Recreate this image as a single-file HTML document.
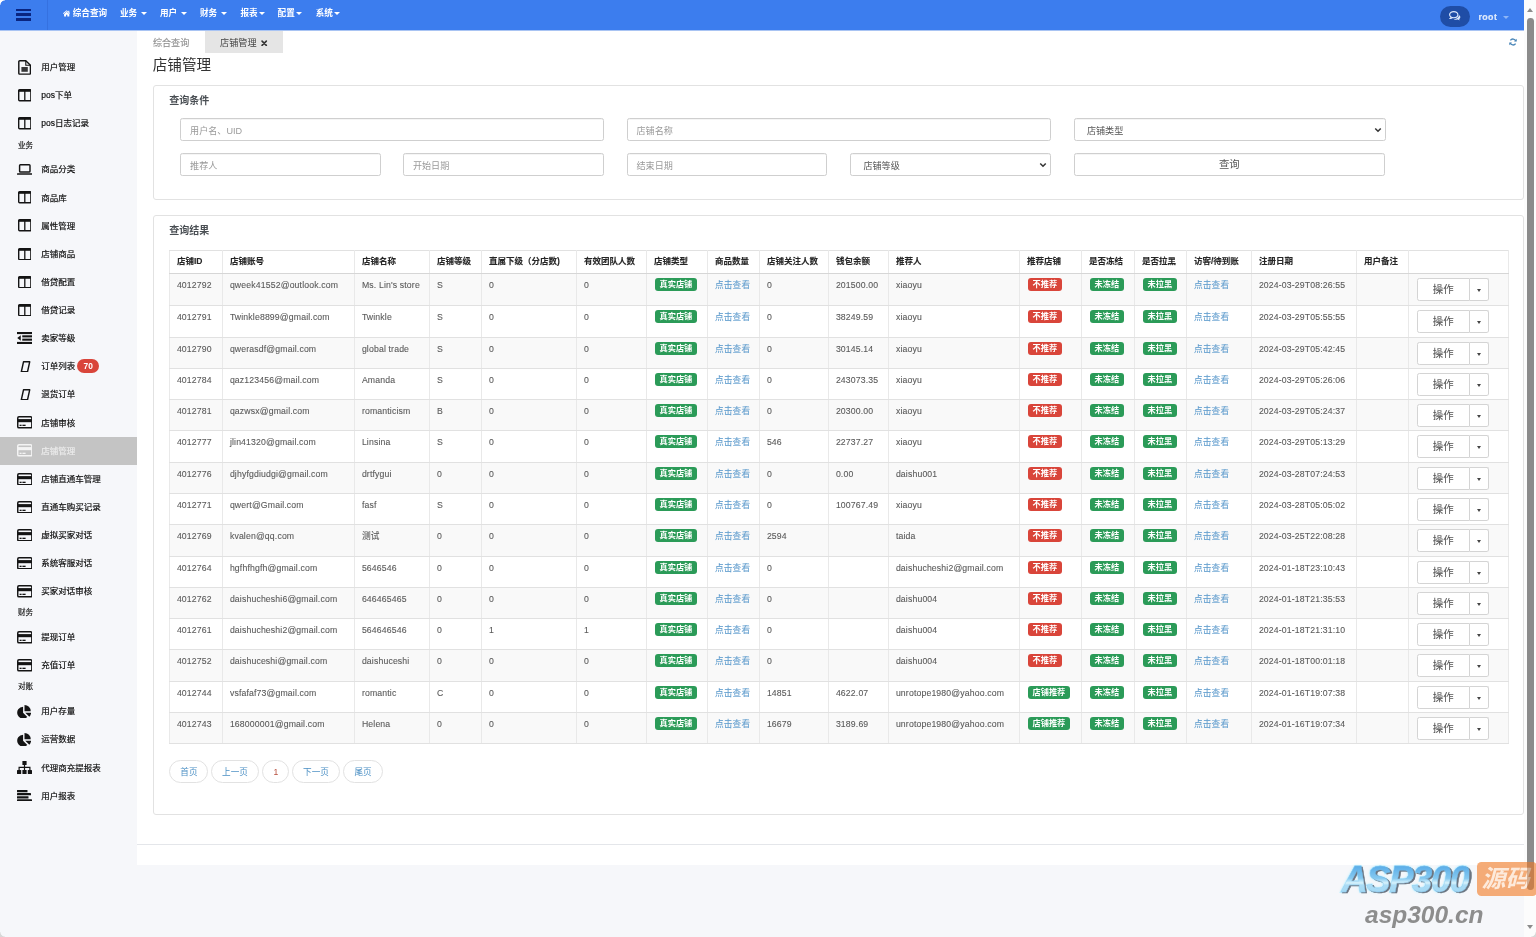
<!DOCTYPE html>
<html lang="zh-CN">
<head>
<meta charset="utf-8">
<title>店铺管理</title>
<style>
*{box-sizing:border-box;margin:0;padding:0}
html,body{width:1536px;height:937px;overflow:hidden}
body{position:relative;background:#f6f7fa;font-family:"Liberation Sans","Noto Sans CJK SC",sans-serif;font-size:8.6px;color:#555;-webkit-font-smoothing:antialiased}
a{text-decoration:none;color:inherit}
#app{position:absolute;left:0;top:0;width:1536px;height:937px;overflow:hidden;will-change:transform;background:#f6f7fa}
/* navbar */
.nav{position:absolute;left:0;top:0;width:1524px;height:31px;background:#3c7dee;border-bottom:1px solid #a9c4f3}
.nav .bars{position:absolute;left:16px;top:8.5px;width:14.5px;height:12.2px}
.nav .bars i{position:absolute;left:0;width:100%;height:2.3px;background:#0a2580;border-radius:.3px}
.nav .div{position:absolute;left:47px;top:0;width:1px;height:30px;background:rgba(20,60,160,.18)}
.nm{position:absolute;top:0;height:27.8px;line-height:27.8px;color:#fff;font-weight:bold;font-size:8.6px;white-space:nowrap}
.nm .sp{display:inline-block;width:2.7px}
.nm svg{vertical-align:middle}
.car{display:inline-block;width:0;height:0;border-left:3.3px solid transparent;border-right:3.3px solid transparent;border-top:3.5px solid currentColor;vertical-align:middle;position:relative;top:-.2px;margin-left:.8px}
.chat{position:absolute;left:1440.2px;top:6px;width:30.2px;height:21.4px;border-radius:11px;background:#1f4da6}
.root{position:absolute;left:1478.4px;top:0;height:34.6px;line-height:34.6px;color:#dfeafc;font-weight:bold;font-size:8.8px;letter-spacing:.45px;-webkit-text-stroke:.2px currentColor}
.rootc{position:absolute;left:1502.4px;top:15.8px;color:#8db6f7}
/* sidebar */
.side{position:absolute;left:0;top:30px;width:137.2px;height:907px;background:#f6f7fa;padding-top:23.2px}
.si{display:block;position:relative;height:28.13px;line-height:28.13px;color:#0c0c0c;font-size:8.5px;white-space:nowrap;-webkit-text-stroke:.18px currentColor}
.si .sic{position:absolute;left:16.4px;top:0;width:16px;height:28.13px;display:flex;align-items:center;justify-content:center;color:#141414}
.si .st{position:absolute;left:41.2px;top:0}
.si.act{background:#c4c4c4;color:#ececec}
.si.act .sic{color:#f4f4f4}
.sh{height:17.82px;line-height:15px;padding-left:17.9px;font-size:7.6px;color:#111;-webkit-text-stroke:.15px currentColor}
.cnt{position:absolute;left:77.4px;top:7px;height:13.7px;line-height:14px;width:21.5px;border-radius:7px;-webkit-text-stroke:0;background:#d9453a;color:#fff;font-weight:bold;font-size:8.4px;text-align:center}
/* main */
.main{position:absolute;left:137.2px;top:30px;width:1387.1px;height:835.2px;background:#fff}
.fline{position:absolute;left:137.2px;top:844px;width:1387.1px;height:1px;background:#e4e6ea}
.tab0{position:absolute;left:152.9px;top:31px;height:22px;line-height:24.6px;font-size:9.1px;color:#8f8f8f;-webkit-text-stroke:.12px currentColor}
.tab1{position:absolute;left:205px;top:31px;width:78px;height:22px;background:#e5e5e5;line-height:24.4px;font-size:9.1px;color:#444;padding-left:15.1px}
.tab1 svg{position:absolute;left:56.3px;top:8.6px}
.refresh{position:absolute;left:1509.3px;top:37.6px;color:#4a86b8}
h1{position:absolute;left:152.7px;top:53px;height:24px;line-height:24px;font-size:14.6px;font-weight:normal;color:#333}
.card{position:absolute;left:153px;width:1371px;border:1px solid #e2e2e2;border-radius:3px;background:#fff}
.ct{position:absolute;left:15.2px;font-size:10px;font-weight:bold;color:#4a4f54;line-height:14px;height:14px}
.inp{position:absolute;height:23px;border:1px solid #cfcfcf;border-radius:2.4px;background:#fff;line-height:24.2px;font-size:9.1px;color:#9a9a9a;padding-left:8.7px;box-shadow:inset 0 .5px .6px rgba(0,0,0,.08)}
.inp.sel{color:#555;padding-left:12.2px}
.inp.sel svg{position:absolute;right:2.6px;top:7.5px}
.inp.btn{text-align:center;padding-left:0;color:#555;font-size:10.4px;line-height:22px}
/* table */
.tb{position:absolute;left:169px;top:250px;width:1340px;table-layout:fixed;border-collapse:collapse;font-size:8.7px;letter-spacing:.15px;color:#5a5a5a}
.tb th,.tb td{border:1px solid #e9e9e9;border-top-color:#e1e1e1;border-bottom-color:#e1e1e1;padding:0 0 0 6.9px;text-align:left;vertical-align:top;white-space:nowrap;overflow:visible}
.tb th{height:23px;line-height:21.8px;font-weight:bold;color:#262626;font-size:8.5px;letter-spacing:0;-webkit-text-stroke:.12px currentColor;border-bottom:1px solid #d6d6d6}
.tb td{height:31px;line-height:23.4px;-webkit-text-stroke:.1px currentColor}
.tb tr.h32 td{height:32px}
.tb tbody tr:nth-child(odd) td{background:#f9f9f9}
.bd{display:inline-block;height:13.2px;line-height:14px;padding:0 4.95px;border-radius:3px;color:#fff;font-weight:bold;font-size:8.2px;letter-spacing:0;vertical-align:top;margin-top:4.3px;margin-left:.7px;-webkit-text-stroke:0}
.bd.g{background:#2b9b58}
.bd.r{background:#d9453a}
.lk{color:#5f9ccd}
.bg{display:inline-block;vertical-align:top;margin-top:4.2px;margin-left:.8px;height:22.8px;white-space:nowrap;font-size:0}
.b1{display:inline-block;width:53.4px;height:22.8px;line-height:22px;border:1px solid #d4d4d4;border-radius:2.4px 0 0 2.4px;text-align:center;font-size:10.4px;color:#555;background:#fff;vertical-align:top}
.b2{display:inline-block;width:19.4px;height:22.8px;border:1px solid #d4d4d4;border-left:0;border-radius:0 2.4px 2.4px 0;background:#fff;vertical-align:top;position:relative}
.b2 i{position:absolute;left:6.5px;top:9.9px;width:0;height:0;border-left:2.8px solid transparent;border-right:2.8px solid transparent;border-top:3px solid #444}
/* pagination */
.pg{position:absolute;top:760.2px;height:23px;line-height:22px;border:1px solid #e2e2e2;border-radius:12px;text-align:center;font-size:8.6px;color:#4a8fc4;background:#fff}
/* scrollbar */
.sb{position:absolute;left:1524.3px;top:0;width:11.7px;height:937px;background:#fcfcfc}
.sb .th{position:absolute;left:2.9px;top:17.6px;width:6.8px;height:872.8px;border-radius:3.4px;background:#8b8b8b}
.sb .up{position:absolute;left:2.8px;top:8.1px;width:0;height:0;border-left:3.4px solid transparent;border-right:3.4px solid transparent;border-bottom:4.2px solid #8c8c8c}
.sb .dn{position:absolute;left:2.8px;top:925.2px;width:0;height:0;border-left:3.4px solid transparent;border-right:3.4px solid transparent;border-top:4.2px solid #8c8c8c}
/* watermark */
.wm1{position:absolute;left:1341.4px;top:858.6px;width:140px;height:42px;font-family:"Liberation Sans",sans-serif;font-style:italic;font-weight:bold;font-size:36.6px;line-height:42px;letter-spacing:-1.5px;white-space:nowrap}
.wm1 span,.wm1::before,.wm1::after{position:absolute;left:0;top:0}
.wm1::before,.wm1::after{content:"ASP300"}
.wm1::before{z-index:0;color:#c4eeff;text-shadow:0 0 2px #b4eaff,0 0 3.5px #c8f0ff;-webkit-text-stroke:1.8px #c8f1ff}
.wm1::after{z-index:1;left:1.7px;top:1.5px;color:#6c7581;-webkit-text-stroke:.5px #6c7581}
.wm1 .fg{z-index:2;background:linear-gradient(180deg,#5eb0e9 20%,#86c9f0 46%,#d8f3fc 57%,#abdcf5 62%,#a2d8f4 82%);-webkit-background-clip:text;background-clip:text;-webkit-text-fill-color:transparent;color:#7cc4ee;-webkit-text-stroke:.35px rgba(120,190,236,.6)}
.wm2{position:absolute;left:1477px;top:862px;width:60px;height:34px;border-radius:4.5px;background:rgba(244,160,100,.88);color:#fdeadb;font-family:"Liberation Sans","Noto Sans CJK SC",sans-serif;font-style:italic;font-weight:bold;font-size:24px;line-height:33px;white-space:nowrap;padding-left:4.6px;overflow:hidden}
.wmt{position:absolute;left:1527.2px;top:862px;width:6.8px;height:28.4px;border-radius:0 0 3.4px 3.4px;background:rgba(150,85,40,.42)}
.wm3{position:absolute;left:1365px;top:900px;height:30px;line-height:30px;font-family:"Liberation Sans",sans-serif;font-style:italic;font-weight:bold;font-size:24.5px;color:#8d8d8d;white-space:nowrap}
.cn{position:absolute;width:5px;height:5px}
.cn.tl{left:0;top:0;background:radial-gradient(circle at 100% 100%,rgba(255,255,255,0) 4.2px,#fff 5px)}
.cn.bl{left:0;top:932px;background:radial-gradient(circle at 100% 0,rgba(200,200,200,0) 4.2px,#d8d8d8 5px)}
.cn.br{left:1531px;top:932px;background:radial-gradient(circle at 0 0,rgba(200,200,200,0) 4.2px,#d8d8d8 5px)}

</style>
</head>
<body>
<div id="app">
<aside class="side">
<a class="si"><span class="sic"><svg class="ic" width="13.2" height="14.8" viewBox="0 0 26.4 29.6" ><path d="M3.4 1.5h12.2l9.3 9v16a1.8 1.8 0 0 1-1.8 1.8H3.4a1.8 1.8 0 0 1-1.8-1.8V3.3A1.8 1.8 0 0 1 3.4 1.5z" fill="none" stroke="currentColor" stroke-width="2.9" stroke-linejoin="round"/><path d="M15.6 1.5v9h9.3" fill="none" stroke="currentColor" stroke-width="2.2"/><rect x="6.8" y="14" width="12.8" height="9.6" fill="currentColor" opacity=".85"/></svg></span><span class="st">用户管理</span></a>
<a class="si"><span class="sic"><svg class="ic" width="13.6" height="12.4" viewBox="0 0 27.2 24.8" ><rect x="1.4" y="1.4" width="24.4" height="22" rx="1.8" fill="none" stroke="currentColor" stroke-width="2.8"/><rect x="1.4" y="1.4" width="24.4" height="4.2" fill="currentColor"/><rect x="12.3" y="3" width="2.6" height="20" fill="currentColor"/></svg></span><span class="st">pos下单</span></a>
<a class="si"><span class="sic"><svg class="ic" width="13.6" height="12.4" viewBox="0 0 27.2 24.8" ><rect x="1.4" y="1.4" width="24.4" height="22" rx="1.8" fill="none" stroke="currentColor" stroke-width="2.8"/><rect x="1.4" y="1.4" width="24.4" height="4.2" fill="currentColor"/><rect x="12.3" y="3" width="2.6" height="20" fill="currentColor"/></svg></span><span class="st">pos日志记录</span></a>
<div class="sh">业务</div>
<a class="si"><span class="sic"><svg class="ic" width="15.6" height="11" viewBox="0 0 31.2 22" ><rect x="5.2" y="1.5" width="20.8" height="14.5" rx="1.6" fill="none" stroke="currentColor" stroke-width="2.9"/><rect x="0" y="18.6" width="31.2" height="3" rx="1" fill="currentColor"/></svg></span><span class="st">商品分类</span></a>
<a class="si"><span class="sic"><svg class="ic" width="13.6" height="12.4" viewBox="0 0 27.2 24.8" ><rect x="1.4" y="1.4" width="24.4" height="22" rx="1.8" fill="none" stroke="currentColor" stroke-width="2.8"/><rect x="1.4" y="1.4" width="24.4" height="4.2" fill="currentColor"/><rect x="12.3" y="3" width="2.6" height="20" fill="currentColor"/></svg></span><span class="st">商品库</span></a>
<a class="si"><span class="sic"><svg class="ic" width="13.6" height="12.4" viewBox="0 0 27.2 24.8" ><rect x="1.4" y="1.4" width="24.4" height="22" rx="1.8" fill="none" stroke="currentColor" stroke-width="2.8"/><rect x="1.4" y="1.4" width="24.4" height="4.2" fill="currentColor"/><rect x="12.3" y="3" width="2.6" height="20" fill="currentColor"/></svg></span><span class="st">属性管理</span></a>
<a class="si"><span class="sic"><svg class="ic" width="13.6" height="12.4" viewBox="0 0 27.2 24.8" ><rect x="1.4" y="1.4" width="24.4" height="22" rx="1.8" fill="none" stroke="currentColor" stroke-width="2.8"/><rect x="1.4" y="1.4" width="24.4" height="4.2" fill="currentColor"/><rect x="12.3" y="3" width="2.6" height="20" fill="currentColor"/></svg></span><span class="st">店铺商品</span></a>
<a class="si"><span class="sic"><svg class="ic" width="13.6" height="12.4" viewBox="0 0 27.2 24.8" ><rect x="1.4" y="1.4" width="24.4" height="22" rx="1.8" fill="none" stroke="currentColor" stroke-width="2.8"/><rect x="1.4" y="1.4" width="24.4" height="4.2" fill="currentColor"/><rect x="12.3" y="3" width="2.6" height="20" fill="currentColor"/></svg></span><span class="st">借贷配置</span></a>
<a class="si"><span class="sic"><svg class="ic" width="13.6" height="12.4" viewBox="0 0 27.2 24.8" ><rect x="1.4" y="1.4" width="24.4" height="22" rx="1.8" fill="none" stroke="currentColor" stroke-width="2.8"/><rect x="1.4" y="1.4" width="24.4" height="4.2" fill="currentColor"/><rect x="12.3" y="3" width="2.6" height="20" fill="currentColor"/></svg></span><span class="st">借贷记录</span></a>
<a class="si"><span class="sic"><svg class="ic" width="15" height="12" viewBox="0 0 30 24" ><rect x="0" y="0" width="30" height="4.2" fill="currentColor"/><rect x="10.5" y="6.6" width="19.5" height="4.2" fill="currentColor"/><rect x="10.5" y="13.2" width="19.5" height="4.2" fill="currentColor"/><rect x="0" y="19.8" width="30" height="4.2" fill="currentColor"/><path d="M7.5 6.3v11.4L0.5 12z" fill="currentColor"/></svg></span><span class="st">卖家等级</span></a>
<a class="si"><span class="sic"><svg class="ic" width="11" height="11.6" viewBox="0 0 22 23.2" style="margin-left:3px"><path d="M7 1.6h12.4l-4.4 20H2.6z" fill="none" stroke="currentColor" stroke-width="2.9" stroke-linejoin="round"/></svg></span><span class="st">订单列表</span><span class="cnt">70</span></a>
<a class="si"><span class="sic"><svg class="ic" width="11" height="11.6" viewBox="0 0 22 23.2" style="margin-left:3px"><path d="M7 1.6h12.4l-4.4 20H2.6z" fill="none" stroke="currentColor" stroke-width="2.9" stroke-linejoin="round"/></svg></span><span class="st">退货订单</span></a>
<a class="si"><span class="sic"><svg class="ic" width="15.6" height="12.6" viewBox="0 0 31.2 25.2" ><rect x="1.5" y="1.5" width="28.2" height="22.2" rx="2.4" fill="none" stroke="currentColor" stroke-width="2.9"/><rect x="1.5" y="6.2" width="28.2" height="6.2" fill="currentColor"/><rect x="5.2" y="17.4" width="4" height="2.6" fill="currentColor"/><rect x="10.8" y="17.4" width="6.4" height="2.6" fill="currentColor"/></svg></span><span class="st">店铺审核</span></a>
<a class="si act"><span class="sic"><svg class="ic" width="15.6" height="12.6" viewBox="0 0 31.2 25.2" ><rect x="1.5" y="1.5" width="28.2" height="22.2" rx="2.4" fill="none" stroke="currentColor" stroke-width="2.9"/><rect x="1.5" y="6.2" width="28.2" height="6.2" fill="currentColor"/><rect x="5.2" y="17.4" width="4" height="2.6" fill="currentColor"/><rect x="10.8" y="17.4" width="6.4" height="2.6" fill="currentColor"/></svg></span><span class="st">店铺管理</span></a>
<a class="si"><span class="sic"><svg class="ic" width="15.6" height="12.6" viewBox="0 0 31.2 25.2" ><rect x="1.5" y="1.5" width="28.2" height="22.2" rx="2.4" fill="none" stroke="currentColor" stroke-width="2.9"/><rect x="1.5" y="6.2" width="28.2" height="6.2" fill="currentColor"/><rect x="5.2" y="17.4" width="4" height="2.6" fill="currentColor"/><rect x="10.8" y="17.4" width="6.4" height="2.6" fill="currentColor"/></svg></span><span class="st">店铺直通车管理</span></a>
<a class="si"><span class="sic"><svg class="ic" width="15.6" height="12.6" viewBox="0 0 31.2 25.2" ><rect x="1.5" y="1.5" width="28.2" height="22.2" rx="2.4" fill="none" stroke="currentColor" stroke-width="2.9"/><rect x="1.5" y="6.2" width="28.2" height="6.2" fill="currentColor"/><rect x="5.2" y="17.4" width="4" height="2.6" fill="currentColor"/><rect x="10.8" y="17.4" width="6.4" height="2.6" fill="currentColor"/></svg></span><span class="st">直通车购买记录</span></a>
<a class="si"><span class="sic"><svg class="ic" width="15.6" height="12.6" viewBox="0 0 31.2 25.2" ><rect x="1.5" y="1.5" width="28.2" height="22.2" rx="2.4" fill="none" stroke="currentColor" stroke-width="2.9"/><rect x="1.5" y="6.2" width="28.2" height="6.2" fill="currentColor"/><rect x="5.2" y="17.4" width="4" height="2.6" fill="currentColor"/><rect x="10.8" y="17.4" width="6.4" height="2.6" fill="currentColor"/></svg></span><span class="st">虚拟买家对话</span></a>
<a class="si"><span class="sic"><svg class="ic" width="15.6" height="12.6" viewBox="0 0 31.2 25.2" ><rect x="1.5" y="1.5" width="28.2" height="22.2" rx="2.4" fill="none" stroke="currentColor" stroke-width="2.9"/><rect x="1.5" y="6.2" width="28.2" height="6.2" fill="currentColor"/><rect x="5.2" y="17.4" width="4" height="2.6" fill="currentColor"/><rect x="10.8" y="17.4" width="6.4" height="2.6" fill="currentColor"/></svg></span><span class="st">系统客服对话</span></a>
<a class="si"><span class="sic"><svg class="ic" width="15.6" height="12.6" viewBox="0 0 31.2 25.2" ><rect x="1.5" y="1.5" width="28.2" height="22.2" rx="2.4" fill="none" stroke="currentColor" stroke-width="2.9"/><rect x="1.5" y="6.2" width="28.2" height="6.2" fill="currentColor"/><rect x="5.2" y="17.4" width="4" height="2.6" fill="currentColor"/><rect x="10.8" y="17.4" width="6.4" height="2.6" fill="currentColor"/></svg></span><span class="st">买家对话审核</span></a>
<div class="sh">财务</div>
<a class="si"><span class="sic"><svg class="ic" width="15.6" height="12.6" viewBox="0 0 31.2 25.2" ><rect x="1.5" y="1.5" width="28.2" height="22.2" rx="2.4" fill="none" stroke="currentColor" stroke-width="2.9"/><rect x="1.5" y="6.2" width="28.2" height="6.2" fill="currentColor"/><rect x="5.2" y="17.4" width="4" height="2.6" fill="currentColor"/><rect x="10.8" y="17.4" width="6.4" height="2.6" fill="currentColor"/></svg></span><span class="st">提现订单</span></a>
<a class="si"><span class="sic"><svg class="ic" width="15.6" height="12.6" viewBox="0 0 31.2 25.2" ><rect x="1.5" y="1.5" width="28.2" height="22.2" rx="2.4" fill="none" stroke="currentColor" stroke-width="2.9"/><rect x="1.5" y="6.2" width="28.2" height="6.2" fill="currentColor"/><rect x="5.2" y="17.4" width="4" height="2.6" fill="currentColor"/><rect x="10.8" y="17.4" width="6.4" height="2.6" fill="currentColor"/></svg></span><span class="st">充值订单</span></a>
<div class="sh">对账</div>
<a class="si"><span class="sic"><svg class="ic" width="14.2" height="13.4" viewBox="0 0 29.2 28" ><path d="M12.5 3.5v12.8l8.8 8.8A12.5 12.5 0 1 1 12.5 3.5z" fill="currentColor"/><path d="M15.5 0a13 13 0 0 1 13 13h-13z" fill="currentColor"/><path d="M17 16h12.2a12.5 12.5 0 0 1-3.6 8.6z" fill="currentColor"/></svg></span><span class="st">用户存量</span></a>
<a class="si"><span class="sic"><svg class="ic" width="14.2" height="13.4" viewBox="0 0 29.2 28" ><path d="M12.5 3.5v12.8l8.8 8.8A12.5 12.5 0 1 1 12.5 3.5z" fill="currentColor"/><path d="M15.5 0a13 13 0 0 1 13 13h-13z" fill="currentColor"/><path d="M17 16h12.2a12.5 12.5 0 0 1-3.6 8.6z" fill="currentColor"/></svg></span><span class="st">运营数据</span></a>
<a class="si"><span class="sic"><svg class="ic" width="15" height="13" viewBox="0 0 30 26" ><rect x="10.8" y="0" width="8.4" height="7.8" rx="1" fill="currentColor"/><rect x="0" y="18" width="8.4" height="8" rx="1" fill="currentColor"/><rect x="10.8" y="18" width="8.4" height="8" rx="1" fill="currentColor"/><rect x="21.6" y="18" width="8.4" height="8" rx="1" fill="currentColor"/><path d="M15 7v11M4.2 18v-5.4h21.6V18" fill="none" stroke="currentColor" stroke-width="2.4"/></svg></span><span class="st">代理商充提报表</span></a>
<a class="si"><span class="sic"><svg class="ic" width="15" height="11.6" viewBox="0 0 30 23.2" ><rect x="0" y="0" width="21" height="4.5" rx="0.6" fill="currentColor"/><rect x="0" y="6.2" width="28" height="4.5" rx="0.6" fill="currentColor"/><rect x="0" y="12.4" width="23" height="4.5" rx="0.6" fill="currentColor"/><rect x="0" y="18.7" width="30" height="4.5" rx="0.6" fill="currentColor"/></svg></span><span class="st">用户报表</span></a>
</aside>
<main class="main"></main>
<div class="fline"></div>

<nav class="nav">
  <div class="bars"><i style="top:0"></i><i style="top:4.9px"></i><i style="top:9.8px"></i></div>
  <div class="div"></div>
  <a class="nm" style="left:63px"><svg width="7.4" height="6.6" viewBox="0 0 15 13"><path d="M7.5 0.4L0 6.6l1 1.2 6.5-5.4L14 7.8l1-1.2-2.2-1.8V1.2h-2v2z" fill="#fff"/><path d="M7.5 3.6L2.2 8v4.4a.6.6 0 0 0 .6.6h3.4V9.4h2.6V13h3.4a.6.6 0 0 0 .6-.6V8z" fill="#fff"/></svg> 综合查询</a>
  <a class="nm" style="left:120px">业务<span class="sp"></span><span class="car"></span></a>
  <a class="nm" style="left:160px">用户<span class="sp"></span><span class="car"></span></a>
  <a class="nm" style="left:200px">财务<span class="sp"></span><span class="car"></span></a>
  <a class="nm" style="left:240.5px">报表<span class="car"></span></a>
  <a class="nm" style="left:277.6px">配置<span class="car"></span></a>
  <a class="nm" style="left:315.7px">系统<span class="car"></span></a>
  <div class="chat"><svg width="12" height="10" viewBox="0 0 24 20" style="position:absolute;left:8.9px;top:5.4px"><path d="M9.5 1.2C4.9 1.2 1.2 4 1.2 7.4c0 1.9 1.2 3.6 3 4.7-.3 1-.9 1.9-1.7 2.6 1.8-.1 3.3-.8 4.4-1.6.8.2 1.7.3 2.6.3 4.6 0 8.3-2.7 8.3-6S14.1 1.2 9.5 1.2z" fill="none" stroke="#dce8fb" stroke-width="2.3"/><path d="M19.8 7.8c1.8 1 2.9 2.6 2.9 4.3 0 1.6-1 3.1-2.6 4.1.3.9.9 1.8 1.6 2.5-1.7-.1-3.1-.7-4.2-1.5-.8.2-1.6.3-2.5.3-2.2 0-4.2-.6-5.6-1.7 5.5.3 10.5-2.6 10.4-8z" fill="#dce8fb"/></svg></div>
  <div class="root">root</div>
  <span class="car rootc"></span>
</nav>

<div class="tab0">综合查询</div>
<div class="tab1">店铺管理<svg width="6.4" height="6.4" viewBox="0 0 12 12"><path d="M2 2l8 8M10 2l-8 8" stroke="#333" stroke-width="3" stroke-linecap="round"/></svg></div>
<svg class="refresh" width="8" height="8" viewBox="0 0 16 16"><path d="M13.6 6.2A6 6 0 0 0 2.8 4.8" fill="none" stroke="currentColor" stroke-width="2.6"/><path d="M2.4 9.8a6 6 0 0 0 10.8 1.4" fill="none" stroke="currentColor" stroke-width="2.6"/><path d="M15.5 1.5v5.5H10z" fill="currentColor"/><path d="M.5 14.5V9H6z" fill="currentColor"/></svg>
<h1>店铺管理</h1>

<div class="card" style="top:85px;height:115px">
  <div class="ct" style="top:8px">查询条件</div>
</div>
<div class="inp" style="left:180.4px;top:118px;width:423.3px">用户名、UID</div>
<div class="inp" style="left:626.8px;top:118px;width:423.8px">店铺名称</div>
<div class="inp sel" style="left:1073.7px;top:118px;width:312.1px">店铺类型<svg width="8" height="6" viewBox="0 0 16 12"><path d="M2.5 3l5.5 5.5L13.5 3" fill="none" stroke="#333" stroke-width="3"/></svg></div>
<div class="inp" style="left:180.4px;top:153px;width:200.2px">推荐人</div>
<div class="inp" style="left:403.2px;top:153px;width:200.5px">开始日期</div>
<div class="inp" style="left:626.8px;top:153px;width:200.2px">结束日期</div>
<div class="inp sel" style="left:850.2px;top:153px;width:200.4px">店铺等级<svg width="8" height="6" viewBox="0 0 16 12"><path d="M2.5 3l5.5 5.5L13.5 3" fill="none" stroke="#333" stroke-width="3"/></svg></div>
<div class="inp btn" style="left:1073.7px;top:153px;width:311.4px">查询</div>

<div class="card" style="top:215px;height:600px">
  <div class="ct" style="top:8.4px">查询结果</div>
</div>
<table class="tb"><colgroup>
<col style="width:53px">
<col style="width:132px">
<col style="width:75px">
<col style="width:52px">
<col style="width:95px">
<col style="width:70px">
<col style="width:61px">
<col style="width:52px">
<col style="width:69px">
<col style="width:60px">
<col style="width:131px">
<col style="width:62px">
<col style="width:53px">
<col style="width:52px">
<col style="width:65px">
<col style="width:105px">
<col style="width:52px">
<col style="width:100px">
</colgroup><thead><tr>
<th>店铺ID</th>
<th>店铺账号</th>
<th>店铺名称</th>
<th>店铺等级</th>
<th>直属下级（分店数)</th>
<th>有效团队人数</th>
<th>店铺类型</th>
<th>商品数量</th>
<th>店铺关注人数</th>
<th>钱包余额</th>
<th>推荐人</th>
<th>推荐店铺</th>
<th>是否冻结</th>
<th>是否拉黑</th>
<th>访客/待到账</th>
<th>注册日期</th>
<th>用户备注</th>
<th></th>
</tr></thead><tbody>
<tr class="h32"><td>4012792</td><td>qweek41552@outlook.com</td><td>Ms. Lin&#x27;s store</td><td>S</td><td>0</td><td>0</td><td><span class="bd g">真实店铺</span></td><td><a class="lk">点击查看</a></td><td>0</td><td>201500.00</td><td>xiaoyu</td><td><span class="bd r">不推荐</span></td><td><span class="bd g">未冻结</span></td><td><span class="bd g">未拉黑</span></td><td><a class="lk">点击查看</a></td><td>2024-03-29T08:26:55</td><td></td><td><span class="bg"><span class="b1">操作</span><span class="b2"><i></i></span></span></td></tr>
<tr class="h32"><td>4012791</td><td>Twinkle8899@gmail.com</td><td>Twinkle</td><td>S</td><td>0</td><td>0</td><td><span class="bd g">真实店铺</span></td><td><a class="lk">点击查看</a></td><td>0</td><td>38249.59</td><td>xiaoyu</td><td><span class="bd r">不推荐</span></td><td><span class="bd g">未冻结</span></td><td><span class="bd g">未拉黑</span></td><td><a class="lk">点击查看</a></td><td>2024-03-29T05:55:55</td><td></td><td><span class="bg"><span class="b1">操作</span><span class="b2"><i></i></span></span></td></tr>
<tr class="h31"><td>4012790</td><td>qwerasdf@gmail.com</td><td>global trade</td><td>S</td><td>0</td><td>0</td><td><span class="bd g">真实店铺</span></td><td><a class="lk">点击查看</a></td><td>0</td><td>30145.14</td><td>xiaoyu</td><td><span class="bd r">不推荐</span></td><td><span class="bd g">未冻结</span></td><td><span class="bd g">未拉黑</span></td><td><a class="lk">点击查看</a></td><td>2024-03-29T05:42:45</td><td></td><td><span class="bg"><span class="b1">操作</span><span class="b2"><i></i></span></span></td></tr>
<tr class="h31"><td>4012784</td><td>qaz123456@mail.com</td><td>Amanda</td><td>S</td><td>0</td><td>0</td><td><span class="bd g">真实店铺</span></td><td><a class="lk">点击查看</a></td><td>0</td><td>243073.35</td><td>xiaoyu</td><td><span class="bd r">不推荐</span></td><td><span class="bd g">未冻结</span></td><td><span class="bd g">未拉黑</span></td><td><a class="lk">点击查看</a></td><td>2024-03-29T05:26:06</td><td></td><td><span class="bg"><span class="b1">操作</span><span class="b2"><i></i></span></span></td></tr>
<tr class="h31"><td>4012781</td><td>qazwsx@gmail.com</td><td>romanticism</td><td>B</td><td>0</td><td>0</td><td><span class="bd g">真实店铺</span></td><td><a class="lk">点击查看</a></td><td>0</td><td>20300.00</td><td>xiaoyu</td><td><span class="bd r">不推荐</span></td><td><span class="bd g">未冻结</span></td><td><span class="bd g">未拉黑</span></td><td><a class="lk">点击查看</a></td><td>2024-03-29T05:24:37</td><td></td><td><span class="bg"><span class="b1">操作</span><span class="b2"><i></i></span></span></td></tr>
<tr class="h32"><td>4012777</td><td>jlin41320@gmail.com</td><td>Linsina</td><td>S</td><td>0</td><td>0</td><td><span class="bd g">真实店铺</span></td><td><a class="lk">点击查看</a></td><td>546</td><td>22737.27</td><td>xiaoyu</td><td><span class="bd r">不推荐</span></td><td><span class="bd g">未冻结</span></td><td><span class="bd g">未拉黑</span></td><td><a class="lk">点击查看</a></td><td>2024-03-29T05:13:29</td><td></td><td><span class="bg"><span class="b1">操作</span><span class="b2"><i></i></span></span></td></tr>
<tr class="h31"><td>4012776</td><td>djhyfgdiudgi@gmail.com</td><td>drtfygui</td><td>0</td><td>0</td><td>0</td><td><span class="bd g">真实店铺</span></td><td><a class="lk">点击查看</a></td><td>0</td><td>0.00</td><td>daishu001</td><td><span class="bd r">不推荐</span></td><td><span class="bd g">未冻结</span></td><td><span class="bd g">未拉黑</span></td><td><a class="lk">点击查看</a></td><td>2024-03-28T07:24:53</td><td></td><td><span class="bg"><span class="b1">操作</span><span class="b2"><i></i></span></span></td></tr>
<tr class="h31"><td>4012771</td><td>qwert@Gmail.com</td><td>fasf</td><td>S</td><td>0</td><td>0</td><td><span class="bd g">真实店铺</span></td><td><a class="lk">点击查看</a></td><td>0</td><td>100767.49</td><td>xiaoyu</td><td><span class="bd r">不推荐</span></td><td><span class="bd g">未冻结</span></td><td><span class="bd g">未拉黑</span></td><td><a class="lk">点击查看</a></td><td>2024-03-28T05:05:02</td><td></td><td><span class="bg"><span class="b1">操作</span><span class="b2"><i></i></span></span></td></tr>
<tr class="h32"><td>4012769</td><td>kvalen@qq.com</td><td>测试</td><td>0</td><td>0</td><td>0</td><td><span class="bd g">真实店铺</span></td><td><a class="lk">点击查看</a></td><td>2594</td><td></td><td>taida</td><td><span class="bd r">不推荐</span></td><td><span class="bd g">未冻结</span></td><td><span class="bd g">未拉黑</span></td><td><a class="lk">点击查看</a></td><td>2024-03-25T22:08:28</td><td></td><td><span class="bg"><span class="b1">操作</span><span class="b2"><i></i></span></span></td></tr>
<tr class="h31"><td>4012764</td><td>hgfhfhgfh@gmail.com</td><td>5646546</td><td>0</td><td>0</td><td>0</td><td><span class="bd g">真实店铺</span></td><td><a class="lk">点击查看</a></td><td>0</td><td></td><td>daishucheshi2@gmail.com</td><td><span class="bd r">不推荐</span></td><td><span class="bd g">未冻结</span></td><td><span class="bd g">未拉黑</span></td><td><a class="lk">点击查看</a></td><td>2024-01-18T23:10:43</td><td></td><td><span class="bg"><span class="b1">操作</span><span class="b2"><i></i></span></span></td></tr>
<tr class="h31"><td>4012762</td><td>daishucheshi6@gmail.com</td><td>646465465</td><td>0</td><td>0</td><td>0</td><td><span class="bd g">真实店铺</span></td><td><a class="lk">点击查看</a></td><td>0</td><td></td><td>daishu004</td><td><span class="bd r">不推荐</span></td><td><span class="bd g">未冻结</span></td><td><span class="bd g">未拉黑</span></td><td><a class="lk">点击查看</a></td><td>2024-01-18T21:35:53</td><td></td><td><span class="bg"><span class="b1">操作</span><span class="b2"><i></i></span></span></td></tr>
<tr class="h31"><td>4012761</td><td>daishucheshi2@gmail.com</td><td>564646546</td><td>0</td><td>1</td><td>1</td><td><span class="bd g">真实店铺</span></td><td><a class="lk">点击查看</a></td><td>0</td><td></td><td>daishu004</td><td><span class="bd r">不推荐</span></td><td><span class="bd g">未冻结</span></td><td><span class="bd g">未拉黑</span></td><td><a class="lk">点击查看</a></td><td>2024-01-18T21:31:10</td><td></td><td><span class="bg"><span class="b1">操作</span><span class="b2"><i></i></span></span></td></tr>
<tr class="h32"><td>4012752</td><td>daishuceshi@gmail.com</td><td>daishuceshi</td><td>0</td><td>0</td><td>0</td><td><span class="bd g">真实店铺</span></td><td><a class="lk">点击查看</a></td><td>0</td><td></td><td>daishu004</td><td><span class="bd r">不推荐</span></td><td><span class="bd g">未冻结</span></td><td><span class="bd g">未拉黑</span></td><td><a class="lk">点击查看</a></td><td>2024-01-18T00:01:18</td><td></td><td><span class="bg"><span class="b1">操作</span><span class="b2"><i></i></span></span></td></tr>
<tr class="h31"><td>4012744</td><td>vsfafaf73@gmail.com</td><td>romantic</td><td>C</td><td>0</td><td>0</td><td><span class="bd g">真实店铺</span></td><td><a class="lk">点击查看</a></td><td>14851</td><td>4622.07</td><td>unrotope1980@yahoo.com</td><td><span class="bd g">店铺推荐</span></td><td><span class="bd g">未冻结</span></td><td><span class="bd g">未拉黑</span></td><td><a class="lk">点击查看</a></td><td>2024-01-16T19:07:38</td><td></td><td><span class="bg"><span class="b1">操作</span><span class="b2"><i></i></span></span></td></tr>
<tr class="h31"><td>4012743</td><td>168000001@gmail.com</td><td>Helena</td><td>0</td><td>0</td><td>0</td><td><span class="bd g">真实店铺</span></td><td><a class="lk">点击查看</a></td><td>16679</td><td>3189.69</td><td>unrotope1980@yahoo.com</td><td><span class="bd g">店铺推荐</span></td><td><span class="bd g">未冻结</span></td><td><span class="bd g">未拉黑</span></td><td><a class="lk">点击查看</a></td><td>2024-01-16T19:07:34</td><td></td><td><span class="bg"><span class="b1">操作</span><span class="b2"><i></i></span></span></td></tr>
</tbody></table>
<a class="pg" style="left:169.3px;width:39.2px">首页</a>
<a class="pg" style="left:211px;width:47.9px">上一页</a>
<a class="pg" style="left:262.3px;width:27.2px;color:#b8503f">1</a>
<a class="pg" style="left:292px;width:48px">下一页</a>
<a class="pg" style="left:343.1px;width:39.8px">尾页</a>

<div class="sb"><div class="up"></div><div class="th"></div><div class="dn"></div></div>

<div class="wm1"><span class="fg">ASP300</span></div>
<div class="wm2">源码</div><div class="wmt"></div>
<div class="wm3">asp300.cn</div>
<div class="cn tl"></div><div class="cn bl"></div><div class="cn br"></div>

</div>

</body>
</html>
